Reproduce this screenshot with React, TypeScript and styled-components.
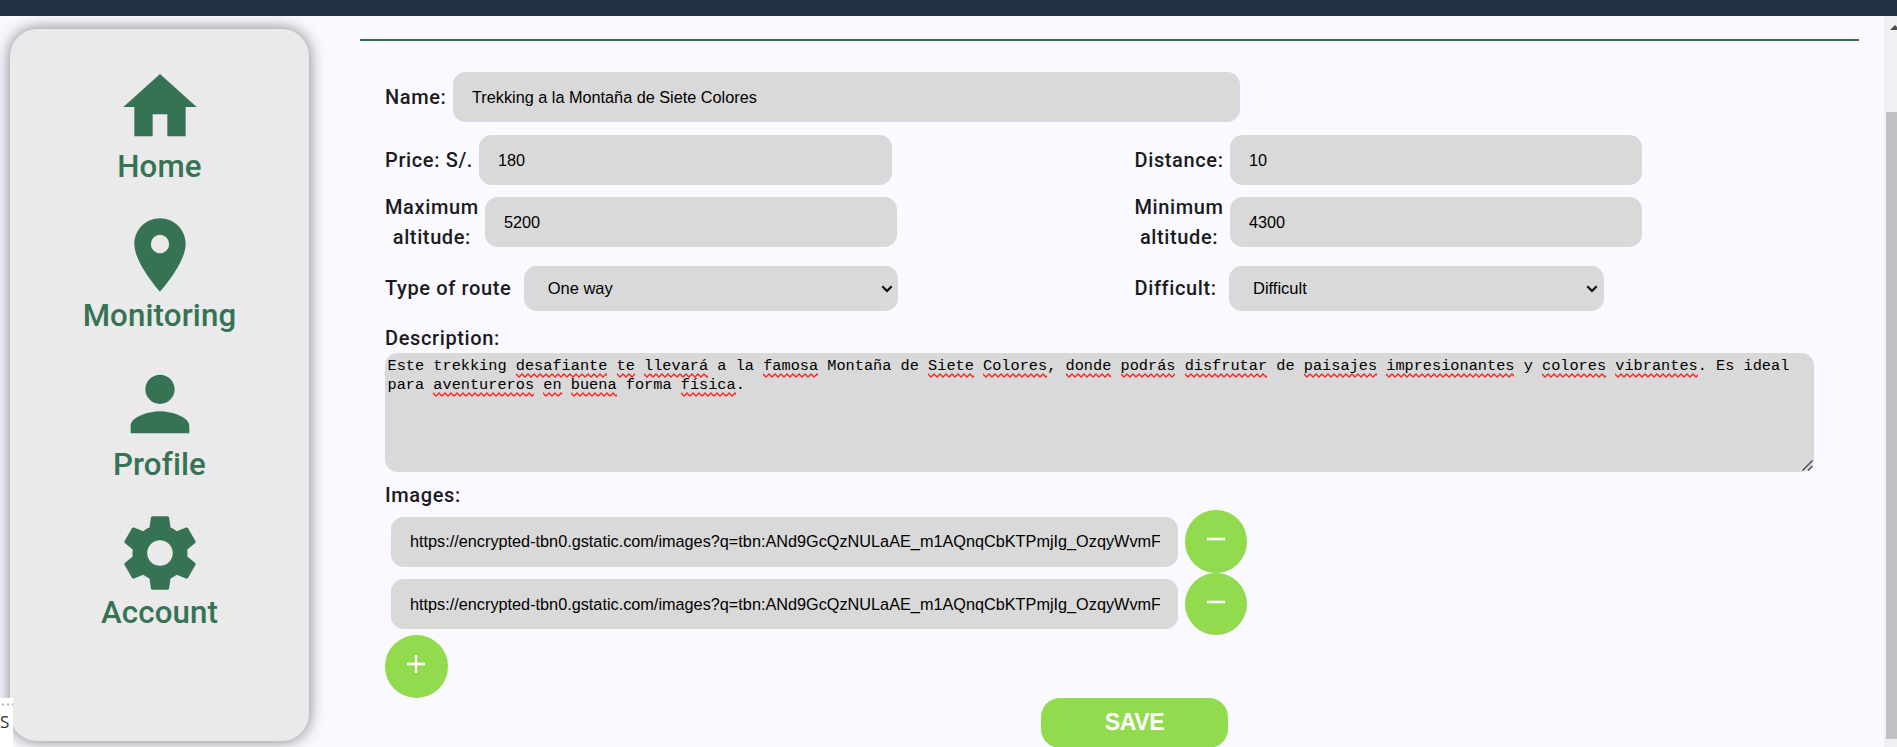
import React from "react";
import styled, { createGlobalStyle } from "styled-components";
import { MdHome, MdLocationOn, MdPerson } from "react-icons/md";

const GlobalStyle = createGlobalStyle`
  * { box-sizing: border-box; }
  body { margin: 0; overflow: hidden; background: #faf9ff; color: #1b1b1f; font-family: Roboto, sans-serif; }
`;

const Page = styled.div`
  position: relative;
  height: 747px;
  overflow: hidden;
  display: flex;
  flex-direction: column;
`;

const TopBar = styled.header`
  flex: 0 0 16px;
  background: #233242;
`;

const Body = styled.div`
  flex: 1;
  min-height: 0;
  display: flex;
`;

const Sidebar = styled.nav`
  flex: 0 0 299px;
  height: 712px;
  margin: 13px 51px 0 10px;
  padding-top: 33.5px;
  border-radius: 27px;
  background: #eaeaea;
  box-shadow: 0 0 16px rgba(0, 0, 0, 0.5);
`;

const NavItem = styled.a`
  height: 148.75px;
  display: flex;
  flex-direction: column;
  align-items: center;
  color: #367355;
  font-size: 31.25px;
  font-weight: 500;
  line-height: 30px;
  letter-spacing: 0.14px;
  svg { width: 88px; height: 88px; }
`;

const NavLabel = styled.span`
  margin-top: 1.6px;

  a:last-child > & { margin-top: 1px; }
`;

const Main = styled.main`
  flex: 0 0 1499px;
  margin-top: 23px;
  border-top: 2px solid #367355;
`;

const Form = styled.form`
  padding: 25px 0 0 25px;
  display: flex;
  flex-direction: column;
  align-items: flex-start;
`;

const Row = styled.div<{ $h: number; $mt?: number }>`
  height: ${(p) => p.$h}px;
  margin-top: ${(p) => p.$mt ?? 0}px;
  display: grid;
  grid-template-columns: 749.5px 700px;
`;

const Field = styled.label`
  display: flex;
  align-items: center;
`;

const Label = styled.span<{ $w?: number }>`
  flex: none;
  width: ${(p) => (p.$w ? p.$w + "px" : "auto")};
  font-size: 20px;
  font-weight: 500;
  line-height: 30px;
  letter-spacing: 0.62px;
  white-space: nowrap;
`;

const TwoLine = styled.span`
  display: inline-block;
  text-align: center;
`;

const Input = styled.input<{ $w: number }>`
  flex: none;
  width: ${(p) => p.$w}px;
  height: 50px;
  padding: 0 18px 0 19px;
  border: 0;
  border-radius: 12.5px;
  background: #d9d9d9;
  color: #000;
  font: 16.25px "Liberation Sans", Arial, sans-serif;
`;

const Select = styled.div`
  flex: none;
  width: 374.5px;
  height: 45px;
  padding: 1px 5.5px 0 24px;
  display: flex;
  align-items: center;
  justify-content: space-between;
  border-radius: 12.5px;
  background: #d9d9d9;
  color: #000;
  font: 16.5px "Liberation Sans", Arial, sans-serif;
`;

const TextBox = styled.div`
  position: relative;
  width: 1429px;
  height: 119px;
  margin-bottom: 8.3px;
  padding: 4px 2.5px;
  border-radius: 12.5px;
  background: #d9d9d9;
  color: #000;
  font: 15.27px/19px "Liberation Mono", monospace;
`;

const TextLine = styled.div`
  display: flex;
  height: 19px;
  white-space: pre;
`;

const Misspelt = styled.span`
  height: 21px;
  background: url("data:image/svg+xml,%3Csvg xmlns='http://www.w3.org/2000/svg' width='6' height='5'%3E%3Cpath d='M-1.500 -.5 0 1 3 4 6 1 7.500 -.5' fill='none' stroke='%23f22' stroke-width='1.300'/%3E%3C/svg%3E") 0 100% repeat-x;
`;

const Grip = styled.svg`
  position: absolute;
  right: 1px;
  bottom: 1px;
`;

const ImageRow = styled.div`
  height: 62.5px;
  padding-left: 6px;
  display: flex;
  align-items: center;
  gap: 6.7px;
`;

const RoundButton = styled.button`
  flex: none;
  width: 62.5px;
  height: 62.5px;
  padding: 0;
  border: 0;
  border-radius: 50%;
  background: #92da4e;
  display: flex;
  align-items: center;
  justify-content: center;
  svg { margin-bottom: 4.5px; }
`;

const SaveButton = styled.button`
  width: 187px;
  height: 50px;
  margin-left: 656px;
  padding: 0;
  border: 0;
  border-radius: 19px;
  background: #92da4e;
  color: #fff;
  font: bold 23px "Liberation Sans", Arial, sans-serif;
  letter-spacing: -0.3px;
`;

const ScrollTrack = styled.div`
  flex: 0 0 13px;
  margin-left: auto;
  padding-left: 2px;
  background: #f1f1f1;
  overflow: hidden;
  display: flex;
  flex-direction: column;
`;

const ArrowBox = styled.div`
  height: 96px;
  padding: 9px 0 0 4px;
  svg { display: block; }
`;

const Thumb = styled.div`
  height: 627px;
  background: #c1c1c1;
`;

const CornerNote = styled.div`
  position: absolute;
  left: 0;
  top: 698px;
  width: 13px;
  height: 49px;
  overflow: hidden;
  background: #fff;
  color: #333;
  font: 500 17px/20px "Open Sans", sans-serif;
  text-indent: -1.5px;
`;

const Dots = styled.svg`
  display: block;
  margin: 5px 0 6px;
`;

const Chevron = () => (
  <svg width="12" height="10" viewBox="0 0 12 10" fill="none" stroke="#000" strokeWidth="2.2">
    <path d="M1.3 2.2 6 7l4.700-4.800" />
  </svg>
);

const Gear = () => (
  <svg viewBox="0 0 24 24" fill="currentColor">
    <path d="M19.430 12.980c.04-.32.07-.64.07-.98s-.03-.66-.07-.98l2.110-1.650c.19-.15.24-.42.12-.64l-2-3.460c-.12-.22-.39-.3-.61-.22l-2.490 1c-.52-.4-1.080-.73-1.690-.98l-.38-2.650C14.460 2.180 14.250 2 14 2h-4c-.25 0-.46.18-.49.42l-.38 2.650c-.61.25-1.170.59-1.690.98l-2.490-1c-.23-.09-.49 0-.61.22l-2 3.460c-.13.22-.07.49.12.64l2.110 1.650c-.04.32-.07.65-.07.98s.03.66.07.98l-2.110 1.650c-.19.15-.24.42-.12.64l2 3.460c.12.22.39.3.61.22l2.490-1c.52.4 1.080.73 1.690.98l.38 2.650c.03.24.24.42.49.42h4c.25 0 .46-.18.49-.42l.38-2.650c.61-.25 1.170-.59 1.690-.98l2.490 1c.23.09.49 0 .61-.22l2-3.460c.12-.22.07-.49-.12-.64l-2.110-1.650zM12 15.500c-1.930 0-3.500-1.570-3.500-3.500s1.570-3.500 3.500-3.500 3.500 1.570 3.500 3.500-1.570 3.500-3.500 3.500z" />
  </svg>
);

const description = [
  "Este trekking *desafiante* *te* *llevará* a la *famosa* Montaña de *Siete* *Colores*, *donde* *podrás* *disfrutar* de *paisajes* *impresionantes* y *colores* *vibrantes*. Es ideal",
  "para *aventureros* *en* *buena* forma *física*.",
];

const url = "https://encrypted-tbn0.gstatic.com/images?q=tbn:ANd9GcQzNULaAE_m1AQnqCbKTPmjIg_OzqyWvmF";

const nav = [
  { icon: MdHome, text: "Home" },
  { icon: MdLocationOn, text: "Monitoring" },
  { icon: MdPerson, text: "Profile" },
  { icon: Gear, text: "Account" },
];

export default function App() {
  return (
    <Page>
      <GlobalStyle />
      <TopBar />
      <Body>
        <Sidebar>
          {nav.map(({ icon: Icon, text }) => (
            <NavItem key={text}>
              <Icon />
              <NavLabel>{text}</NavLabel>
            </NavItem>
          ))}
        </Sidebar>
        <Main>
          <Form>
            <Row $h={62}>
              <Field>
                <Label $w={68}>Name:</Label>
                <Input $w={787} defaultValue="Trekking a la Montaña de Siete Colores" />
              </Field>
            </Row>
            <Row $h={62} $mt={1}>
              <Field>
                <Label $w={94}>Price: S/.</Label>
                <Input $w={412.5} defaultValue="180" />
              </Field>
              <Field>
                <Label $w={95.5}>Distance:</Label>
                <Input $w={412} defaultValue="10" />
              </Field>
            </Row>
            <Row $h={62}>
              <Field>
                <Label $w={100}>
                  <TwoLine>Maximum<br />altitude:</TwoLine>
                </Label>
                <Input $w={412} defaultValue="5200" />
              </Field>
              <Field>
                <Label $w={95.5}>
                  <TwoLine>Minimum<br />altitude:</TwoLine>
                </Label>
                <Input $w={412} defaultValue="4300" />
              </Field>
            </Row>
            <Row $h={70}>
              <Field>
                <Label $w={138.7}>Type of route</Label>
                <Select>One way<Chevron /></Select>
              </Field>
              <Field>
                <Label $w={94.5}>Difficult:</Label>
                <Select>Difficult<Chevron /></Select>
              </Field>
            </Row>
            <Label>Description:</Label>
            <TextBox>
              {description.map((line) => (
                <TextLine key={line}>
                  {line.split("*").map((part, i) =>
                    i % 2 ? <Misspelt key={i}>{part}</Misspelt> : <span key={i}>{part}</span>
                  )}
                </TextLine>
              ))}
              <Grip width="11" height="11" stroke="#444" strokeWidth="1.3">
                <path d="M0.500 10.500 10.500 0.500M6 10.500 10.500 6" />
              </Grip>
            </TextBox>
            <Label>Images:</Label>
            {[0, 1].map((n) => (
              <ImageRow key={n}>
                <Input $w={787} defaultValue={url} />
                <RoundButton type="button">
                  <svg width="18" height="18" stroke="#fff" strokeWidth="2.6"><path d="M0 9h18" /></svg>
                </RoundButton>
              </ImageRow>
            ))}
            <RoundButton type="button">
              <svg width="18" height="18" stroke="#fff" strokeWidth="2.4"><path d="M0 9h18M9 0v18" /></svg>
            </RoundButton>
            <SaveButton type="button">SAVE</SaveButton>
          </Form>
        </Main>
        <ScrollTrack>
          <ArrowBox>
            <svg width="10" height="5"><path d="M0 5 5 0l5 5z" fill="#505050" /></svg>
          </ArrowBox>
          <Thumb />
        </ScrollTrack>
      </Body>
      <CornerNote>
        <Dots width="13" height="3" fill="#bbb">
          <circle cx="3" cy="1.500" r="1.200" /><circle cx="8" cy="1.500" r="1.200" /><circle cx="13" cy="1.500" r="1.200" />
        </Dots>
        S
      </CornerNote>
    </Page>
  );
}
